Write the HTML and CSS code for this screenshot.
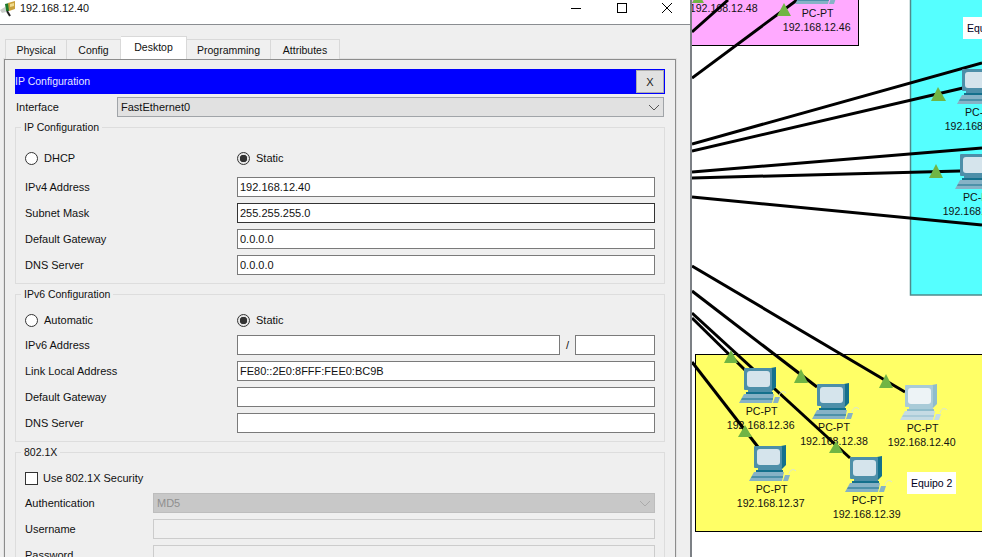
FILE: index.html

```html
<!DOCTYPE html>
<html lang="es">
<head>
  <meta charset="UTF-8">
  <title>192.168.12.40</title>
  <link rel="stylesheet" href="styles.css">
</head>
<body>
  <div class="window">
    <div class="titlebar">
      <svg class="app-icon" width="17" height="17" viewBox="0 0 17 17">
        <path d="M0 9 L5 6 L6 11 L2 12 Z" fill="#c9cdc9"/>
        <path d="M5 3 L9 2 L9 10 L6 10 Z" fill="#1f7a2c"/>
        <path d="M8 2 L15 0 L15 8 L9 10 Z" fill="#c9a13c"/>
        <path d="M10 3 L14 2 L14 5 L10 6 Z" fill="#f1dc8e"/>
        <path d="M7 10 L10 15" stroke="#222" stroke-width="2" fill="none"/>
      </svg>
      <span class="title-text">192.168.12.40</span>
      <div class="win-buttons">
        <div class="win-btn">
          <svg width="12" height="12" viewBox="0 0 12 12"><path d="M1 6.5 H11" stroke="#000" fill="none"/></svg>
        </div>
        <div class="win-btn">
          <svg width="12" height="12" viewBox="0 0 12 12"><rect x="1.5" y="1.5" width="9" height="9" stroke="#000" fill="none"/></svg>
        </div>
        <div class="win-btn">
          <svg width="12" height="12" viewBox="0 0 12 12"><path d="M1 1 L11 11 M11 1 L1 11" stroke="#000" fill="none"/></svg>
        </div>
      </div>
    </div>

    <div class="tabs">
      <div class="tab tab-physical">Physical</div>
      <div class="tab tab-config">Config</div>
      <div class="tab tab-desktop active">Desktop</div>
      <div class="tab tab-programming">Programming</div>
      <div class="tab tab-attributes">Attributes</div>
    </div>

    <div class="pane">
      <div class="header-bar">
        <span class="header-text">IP Configuration</span>
        <button class="close-btn">X</button>
      </div>

      <div class="interface-row">
        <label class="interface-label">Interface</label>
        <div class="select">
          <span>FastEthernet0</span>
          <svg width="12" height="7" viewBox="0 0 12 7"><path d="M1 1 L6 6 L11 1" stroke="#555" fill="none"/></svg>
        </div>
      </div>

      <fieldset class="group group-v4">
        <legend>IP Configuration</legend>
        <div class="choices">
          <div class="choice"><span class="radio"></span>DHCP</div>
          <div class="choice"><span class="radio checked"></span>Static</div>
        </div>
        <div class="row"><label>IPv4 Address</label><input type="text" value="192.168.12.40"></div>
        <div class="row"><label>Subnet Mask</label><input class="focused" type="text" value="255.255.255.0"></div>
        <div class="row"><label>Default Gateway</label><input type="text" value="0.0.0.0"></div>
        <div class="row"><label>DNS Server</label><input type="text" value="0.0.0.0"></div>
      </fieldset>

      <fieldset class="group">
        <legend>IPv6 Configuration</legend>
        <div class="choices">
          <div class="choice"><span class="radio"></span>Automatic</div>
          <div class="choice"><span class="radio checked"></span>Static</div>
        </div>
        <div class="row">
          <label>IPv6 Address</label>
          <input class="ipv6-addr" type="text">
          <span class="slash">/</span>
          <input class="ipv6-prefix" type="text">
        </div>
        <div class="row"><label>Link Local Address</label><input type="text" value="FE80::2E0:8FFF:FEE0:BC9B"></div>
        <div class="row"><label>Default Gateway</label><input type="text"></div>
        <div class="row"><label>DNS Server</label><input type="text"></div>
      </fieldset>

      <fieldset class="group">
        <legend>802.1X</legend>
        <div class="choices">
          <div class="choice"><span class="checkbox"></span>Use 802.1X Security</div>
        </div>
        <div class="row row-short">
          <label>Authentication</label>
          <div class="select disabled">
            <span>MD5</span>
            <svg width="12" height="7" viewBox="0 0 12 7"><path d="M1 1 L6 6 L11 1" stroke="#aaa" fill="none"/></svg>
          </div>
        </div>
        <div class="row row-short"><label>Username</label><input type="text" disabled></div>
        <div class="row row-short"><label>Password</label><input type="text" disabled></div>
      </fieldset>
    </div>
  </div>

  <div class="workspace">
    <svg class="canvas" width="290" height="557" viewBox="692 0 290 557">
      <defs>
        <symbol id="pc" width="50" height="37" viewBox="0 0 50 37" overflow="visible">
          <path class="pc-side" d="M32 1 L37 0 L37 20 L32 25 Z"/>
          <rect class="pc-frame" x="5" y="1" width="28" height="22" rx="1"/>
          <rect class="pc-screen" x="8" y="4" width="23" height="16" rx="3"/>
          <rect class="pc-frame" x="9" y="23" width="24" height="2"/>
          <rect class="pc-side" x="7" y="25" width="27" height="2"/>
          <path class="pc-keys" d="M5 27 H35 L33 36 H0 Z"/>
          <path class="pc-side" d="M3 31.500 H34 V32.500 H2 Z"/>
          <path class="pc-keys" d="M36 30 H41 L39 36 H34 Z"/>
          <path class="pc-cable" d="M40 29 C41 25 44 23 47 26"/>
        </symbol>
      </defs>

      <rect class="zone zone-pink" x="680" y="-10" width="178.500" height="55.500"/>
      <rect class="zone zone-cyan" x="910.500" y="-10" width="90" height="305"/>
      <rect class="zone zone-yellow" x="695.500" y="354.500" width="300" height="177"/>

      <rect class="note" x="963" y="17" width="40" height="22"/>
      <text class="note-text" x="967" y="32">Equipo 1</text>
      <rect class="note" x="907" y="472" width="49" height="22"/>
      <text class="note-text" x="911" y="487">Equipo 2</text>

      <text class="pc-label" x="723.700" y="12">192.168.12.48</text>
      <text class="pc-label" x="817.700" y="17">PC-PT</text>
      <text class="pc-label" x="816.700" y="31">192.168.12.46</text>
      <text class="pc-label start" x="965" y="116">PC-PT</text>
      <text class="pc-label start" x="944.700" y="130">192.168.12.45</text>
      <text class="pc-label start" x="963" y="201">PC-PT</text>
      <text class="pc-label start" x="942.700" y="215">192.168.12.44</text>
      <text class="pc-label" x="761.700" y="415">PC-PT</text>
      <text class="pc-label" x="760.700" y="429">192.168.12.36</text>
      <text class="pc-label" x="834" y="431">PC-PT</text>
      <text class="pc-label" x="834" y="445">192.168.12.38</text>
      <text class="pc-label" x="922.700" y="432">PC-PT</text>
      <text class="pc-label" x="921.700" y="446">192.168.12.40</text>
      <text class="pc-label" x="771.700" y="493">PC-PT</text>
      <text class="pc-label" x="770.700" y="507">192.168.12.37</text>
      <text class="pc-label" x="867.700" y="504">PC-PT</text>
      <text class="pc-label" x="866.700" y="518">192.168.12.39</text>

      <g class="links">
        <line x1="692" y1="32" x2="728" y2="0"/>
        <line x1="692" y1="78" x2="797" y2="0"/>
        <line x1="692" y1="144" x2="982" y2="63"/>
        <line x1="692" y1="151" x2="963" y2="88"/>
        <line x1="692" y1="172" x2="982" y2="148"/>
        <line x1="692" y1="178" x2="960" y2="171"/>
        <line x1="692" y1="197" x2="982" y2="225"/>
        <line x1="692" y1="266" x2="905" y2="392"/>
        <line x1="692" y1="291" x2="817" y2="387"/>
        <line x1="692" y1="318" x2="745" y2="370"/>
        <line x1="692" y1="313" x2="850" y2="458"/>
        <line x1="692" y1="362" x2="758" y2="447"/>
      </g>

      <use class="pc" href="#pc" x="795" y="-32"/>
      <use class="pc" href="#pc" x="957" y="68"/>
      <use class="pc" href="#pc" x="955" y="153"/>
      <use class="pc" href="#pc" x="739" y="367"/>
      <use class="pc" href="#pc" x="812" y="383"/>
      <use class="pc pc-off" href="#pc" x="900" y="384"/>
      <use class="pc" href="#pc" x="749" y="445"/>
      <use class="pc" href="#pc" x="845" y="456"/>

      <g class="lights">
        <polygon points="698,-8 692,3 704,3"/>
        <polygon points="784,3 777,16 791,16"/>
        <polygon points="938,87 931,101 946,101"/>
        <polygon points="936,164 929,178 943,178"/>
        <polygon points="731,350 724,363 738,363"/>
        <polygon points="801,369 794,383 808,383"/>
        <polygon points="886,374 879,388 893,388"/>
        <polygon points="745,425 738,437 752,437"/>
        <polygon points="836,441 829,453 843,453"/>
      </g>
    </svg>
  </div>
</body>
</html>
```

FILE: styles.css

```css
html, body {
  margin: 0;
  height: 100%;
  overflow: hidden;
}

body {
  display: flex;
  width: 982px;
  height: 557px;
  background-color: #ffffff;
  font-family: "Liberation Sans", Arial, sans-serif;
  font-size: 11px;
  color: #111111;
}

/* dialog */
.window {
  flex: none;
  width: 690px;
  height: 557px;
  background-color: #efefef;
  border-right: 2px solid #7c8085;
  overflow: hidden;
}

.titlebar {
  display: flex;
  align-items: center;
  height: 24px;
  background-color: #ffffff;
  border-bottom: 1px solid #8a8d91;
}

.app-icon {
  flex: none;
  margin-top: -6px;
}

.title-text {
  margin-left: 3px;
  font-size: 10.8px;
  position: relative;
  top: -4px;
}

.win-buttons {
  display: flex;
  margin-left: auto;
  margin-top: -8px;
}

.win-btn {
  display: flex;
  justify-content: center;
  width: 45.500px;
}

/* tabs */
.tabs {
  display: flex;
  align-items: flex-end;
  height: 34px;
  padding-left: 5px;
}

.tab {
  display: flex;
  align-items: center;
  justify-content: center;
  height: 20px;
  box-sizing: border-box;
  border: 1px solid #d9d9d9;
  border-bottom: none;
  background-color: #f0f0f0;
  font-size: 10.5px;
}

.tab + .tab {
  border-left: none;
}

.tab-physical { width: 62px; }
.tab-config { width: 54px; }
.tab-desktop { width: 66px; }
.tab-programming { width: 84px; }
.tab-attributes { width: 69px; }

.tab.active {
  height: 23px;
  background-color: #ffffff;
  padding-bottom: 3px;
}

/* pane with the tool inside */
.pane {
  box-sizing: border-box;
  width: 672px;
  height: 520px;
  margin-left: 4px;
  padding: 9px 0 0 10px;
  border: 1px solid #8c8c8c;
  box-shadow: 0 0 0 1px #e2e2e2;
}

.header-bar {
  display: flex;
  align-items: center;
  justify-content: space-between;
  box-sizing: border-box;
  width: 650px;
  height: 25px;
  padding-right: 1px;
  background-color: #0000ff;
  color: #e8e8ff;
  font-size: 10.500px;
}

.header-text {
  margin-top: -2px;
}

.close-btn {
  width: 28px;
  height: 23px;
  padding: 0;
  background-color: #e1e1e1;
  border: 1px solid #adadad;
  font-family: inherit;
  font-size: 11px;
  color: #222222;
}

.interface-row {
  display: flex;
  align-items: center;
  margin-top: 3px;
}

.interface-label {
  width: 101px;
  padding-left: 1px;
}

.select {
  display: flex;
  align-items: center;
  justify-content: space-between;
  box-sizing: border-box;
  flex: 1;
  height: 20px;
  padding: 0 3px;
  background-color: #e1e1e1;
  border: 1px solid #a0a4a8;
}

.interface-row .select {
  flex: none;
  width: 547px;
}

.select.disabled {
  background-color: #c8c8c8;
  border-color: #bdbdbd;
  color: #8f8f8f;
}

/* groups */
.group {
  box-sizing: border-box;
  width: 650px;
  margin: 3px 0 0;
  padding: 0 9px 8px;
  border: 1px solid #dddddd;
  min-inline-size: 0;
}

.group legend {
  margin-left: -4px;
  padding: 0 3px;
  font-size: 10.500px;
  line-height: 14px;
}

.choices {
  display: flex;
  height: 20px;
  margin-top: 9px;
}

.choice {
  display: flex;
  align-items: center;
  width: 212px;
  gap: 6px;
}

.radio, .checkbox {
  flex: none;
  box-sizing: border-box;
  width: 13px;
  height: 13px;
  background-color: #ffffff;
  border: 1px solid #333333;
}

.radio {
  border-radius: 50%;
}

.radio.checked {
  background: radial-gradient(circle, #333333 0, #333333 3.500px, #e6e6e6 4px);
}

.checkbox {
  margin-right: -1px;
}

.row {
  display: flex;
  align-items: center;
  height: 20px;
  margin-top: 6px;
}

.row label {
  flex: none;
  width: 212px;
}

.row-short label {
  width: 128px;
}

.choices + .row {
  margin-top: 5px;
}

.group-v4 .choices {
  margin-top: 14px;
}

.group-v4 .choices + .row {
  margin-top: 9px;
}

input {
  flex: 1;
  min-width: 0;
  box-sizing: border-box;
  height: 20px;
  margin: 0;
  padding: 0 2px;
  background-color: #ffffff;
  border: 1px solid #7a7a7a;
  border-radius: 0;
  outline: none;
  font-family: inherit;
  font-size: 11px;
  color: #111111;
}

input.focused {
  border-color: #333333;
}

input:disabled {
  background-color: #f0f0f0;
  border: 1px solid #cccccc;
}

.ipv6-addr {
  flex: none;
  width: 323px;
}

.slash {
  width: 15px;
  text-align: center;
}

.ipv6-prefix {
  flex: none;
  width: 80px;
}

/* network canvas */
.workspace {
  flex: 1;
  overflow: hidden;
}

.canvas {
  display: block;
}

.zone {
  stroke: #000000;
  stroke-width: 1;
}

.zone-pink { fill: #ffaaff; }
.zone-yellow { fill: #ffff66; }

.zone-cyan {
  fill: #55ffff;
  stroke: #4f8a8c;
  stroke-width: 1.500;
}

.note { fill: #ffffff; }

.note-text {
  font-size: 10.500px;
  fill: #000022;
}

.pc-label {
  font-size: 10.600px;
  text-anchor: middle;
  fill: #111111;
}

.pc-label.start {
  text-anchor: start;
}

.links line {
  stroke: #000000;
  stroke-width: 3;
}

.pc {
  --pc-frame: #4d8fa9;
  --pc-side: #14708c;
  --pc-screen: #d5e4ec;
  --pc-keys: #86b2c6;
  --pc-cable: #d8e4dc;
}

.pc-off {
  --pc-frame: #a9cbd8;
  --pc-side: #8fbccc;
  --pc-screen: #edf3f6;
  --pc-keys: #c5dbe4;
}

.pc-frame { fill: var(--pc-frame); }
.pc-side { fill: var(--pc-side); }
.pc-screen { fill: var(--pc-screen); }
.pc-keys { fill: var(--pc-keys); }

.pc-cable {
  fill: none;
  stroke: var(--pc-cable);
}

.lights polygon {
  fill: #70b544;
}
```
